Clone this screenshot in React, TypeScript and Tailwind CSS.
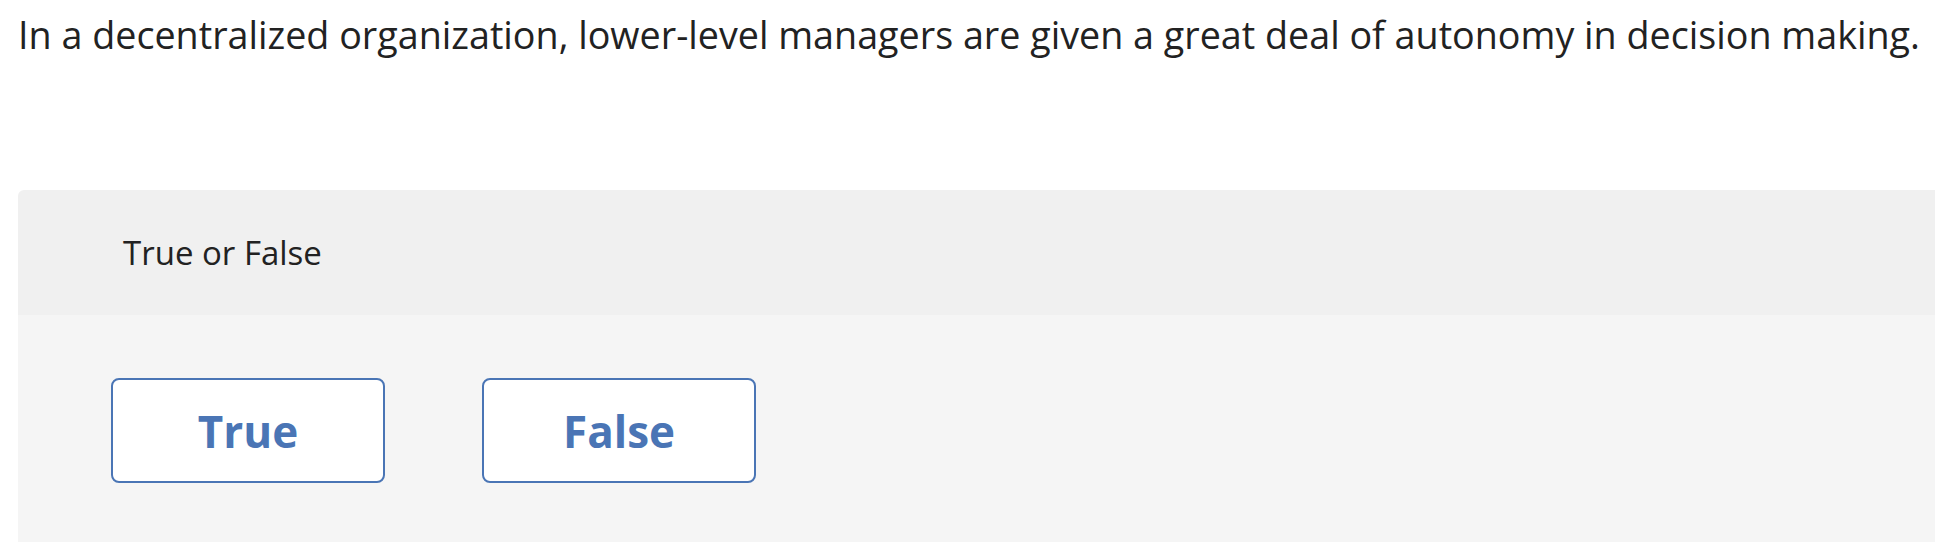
import React from "react";

export default function App() {
  return (
    <div className="w-full min-h-[542px] bg-white overflow-hidden" style={{ fontFamily: "'Open Sans', Lato, sans-serif" }}>
      <p className="pt-[9px] pl-[18px] text-[37.7px] leading-[52px] text-[#222222] whitespace-nowrap">
        In a decentralized organization, lower-level managers are given a great deal of autonomy in decision making.
      </p>
      <div className="mt-[129px] ml-[18px] w-[1960px] rounded-tl-[6px] overflow-hidden">
        <div className="h-[125px] bg-[#f0f0f0] flex items-center pl-[105px]">
          <span className="text-[33px] text-[#222222]">True or False</span>
        </div>
        <div className="bg-[#f5f5f5] pt-[63px] pl-[93px] pb-[80px] flex gap-[97px]">
          <button className="w-[274px] h-[105px] bg-white border-2 border-[#4a75b5] rounded-[8px] text-[#4a75b5] text-[44px] font-bold flex items-center justify-center">
            True
          </button>
          <button className="w-[274px] h-[105px] bg-white border-2 border-[#4a75b5] rounded-[8px] text-[#4a75b5] text-[44px] font-bold flex items-center justify-center">
            False
          </button>
        </div>
      </div>
    </div>
  );
}
